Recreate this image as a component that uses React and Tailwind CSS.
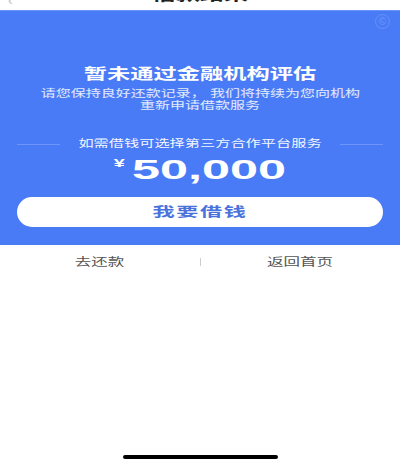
import React from "react";

const font = { fontFamily: '"Liberation Sans", "Noto Sans CJK SC", sans-serif' };

export default function App() {
  return (
    <div className="relative w-[400px] h-[463px] bg-white overflow-hidden" style={font}>
      {/* cropped header */}
      <div className="relative h-[10px] overflow-hidden flex justify-center">
        <div className="-mt-[13px] text-[16px] leading-[16px] font-bold text-[#222]">
          <span className="inline-block scale-x-[1.5]">借款结果</span>
        </div>
        <div className="absolute left-[8px] -top-[10px] text-[14px] text-[#bbb]">‹</div>
      </div>

      {/* blue panel */}
      <div className="relative h-[235px] bg-[#4a7bf6] flex flex-col border-t border-[#6d95f8]">
        <div className="absolute right-[10px] top-[3px] w-[15px] h-[15px] rounded-full border border-white/15 flex items-center justify-center text-[10px] leading-none text-white/20">
          ©
        </div>

        <div className="pt-[53px] h-[20px] box-content leading-[20px] flex justify-center text-white text-[15px] font-bold">
          <span className="inline-block scale-x-[1.55]">暂未通过金融机构评估</span>
        </div>

        <div className="mt-[4px] h-[12px] leading-[12px] flex justify-center text-white/85 text-[10px]">
          <span className="inline-block scale-x-[1.5] whitespace-nowrap">请您保持良好还款记录， 我们将持续为您向机构</span>
        </div>
        <div className="h-[12px] leading-[12px] flex justify-center text-white/85 text-[10px]">
          <span className="inline-block scale-x-[1.5]">重新申请借款服务</span>
        </div>

        <div className="mt-[26px] h-[12px] px-[17px] flex items-center justify-between">
          <div className="w-[43px] h-px bg-white/20" />
          <span className="inline-block scale-x-[1.52] text-[10px] leading-[12px] text-white/95 whitespace-nowrap">
            如需借钱可选择第三方合作平台服务
          </span>
          <div className="w-[43px] h-px bg-white/20" />
        </div>

        <div className="mt-[6px] h-[28px] flex justify-center">
          <span className="inline-flex items-start scale-x-[1.8] text-white">
            <span className="mt-[2px] text-[11px] leading-[11px] font-bold">¥</span>
            <span className="ml-[4px] text-[28px] leading-[28px] font-bold">50,000</span>
          </span>
        </div>

        <div className="mt-[13px] mx-[17px] h-[30px] rounded-full bg-white flex items-center justify-center">
          <span className="inline-block scale-x-[1.7] text-[13px] leading-[30px] tracking-[1px] font-bold text-[#4a72dc]">
            我要借钱
          </span>
        </div>
      </div>

      {/* bottom links */}
      <div className="h-[34px] flex items-center">
        <div className="flex-1 flex justify-center">
          <span className="inline-block scale-x-[1.5] text-[11px] leading-[34px] text-[#555]">去还款</span>
        </div>
        <div className="w-px h-[8px] bg-[#ccc]" />
        <div className="flex-1 flex justify-center">
          <span className="inline-block scale-x-[1.5] text-[11px] leading-[34px] text-[#555]">返回首页</span>
        </div>
      </div>

      <div className="absolute bottom-[4px] left-[123px] w-[155px] h-[4px] rounded-full bg-black" />
    </div>
  );
}
